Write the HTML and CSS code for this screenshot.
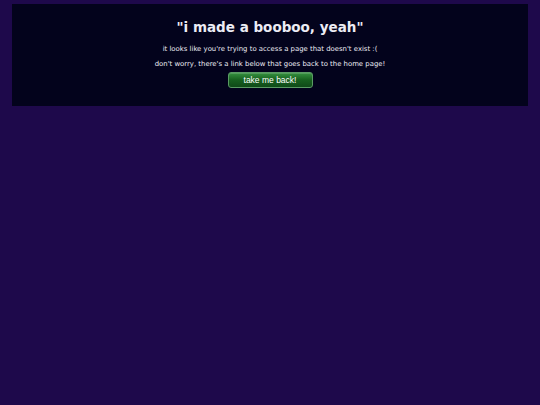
FILE: index.html
```html
<!DOCTYPE html>
<html lang="en">

<head>
    <meta charset="UTF-8">
    <meta name="viewport" content="width=device-width, initial-scale=1.0">
    <title>404</title>
    <link rel="stylesheet" href="styles.css">
</head>

<body>
    <div class="notfound">
        <h1>"i made a booboo, yeah"</h1>
        <p>it looks like you're trying to access a page that doesn't exist :(</p>
        <p>don't worry, there's a link below that goes back to the home page!</p>
        <a class="backbtn" href="/">take me back!</a>
    </div>
</body>

</html>
```

FILE: styles.css
```css
body,
h1,
p {
    margin: 0;
}

body {
    padding: 4px 12px;
    background-color: #1e094b;
    font-family: "DejaVu Sans", Verdana, sans-serif;
    color: #ececf4;
}

.notfound {
    display: flex;
    flex-direction: column;
    align-items: center;
    height: 102px;
    box-sizing: border-box;
    padding-top: 15px;
    background-color: #03031c;
    text-align: center;
}

.notfound>h1 {
    font-size: 13.5px;
    line-height: 17px;
    margin-bottom: 6px;
}

.notfound>p {
    font-size: 6.9px;
    line-height: 15px;
}

.backbtn {
    display: block;
    width: 85px;
    height: 16px;
    box-sizing: border-box;
    border: 1px solid #5a9a64;
    border-radius: 3px;
    background: linear-gradient(#35913f, #17601f 50%, #0f4a18);
    box-shadow: inset 0 1px 0 rgba(255, 255, 255, 0.15);
    font-family: "Liberation Sans", Arial, sans-serif;
    font-size: 8.5px;
    line-height: 14px;
    color: #fff;
    text-decoration: none;
}
```
